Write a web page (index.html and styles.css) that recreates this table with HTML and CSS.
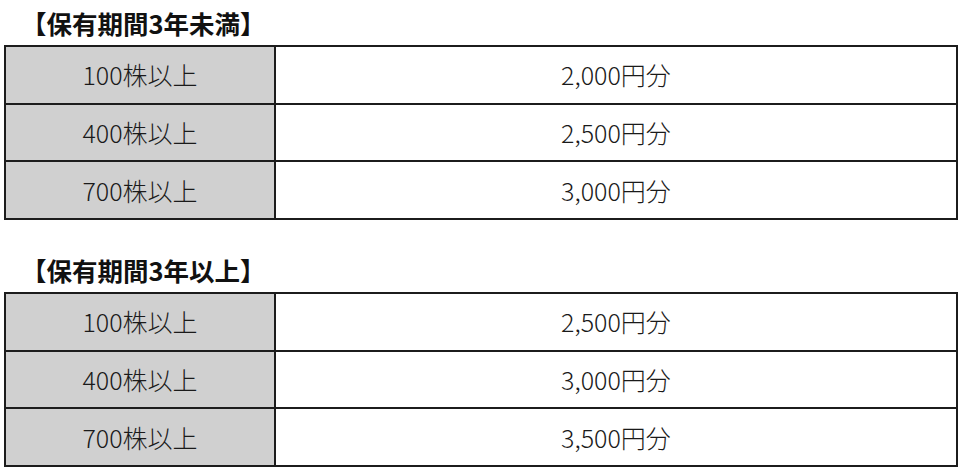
FILE: index.html
```html
<!DOCTYPE html>
<html lang="ja">
<head>
<meta charset="utf-8">
<link rel="stylesheet" href="styles.css">
</head>
<body>
<section class="block">
  <h2 class="title">【保有期間3年未満】</h2>
  <table class="tbl">
    <tr><td class="k">100株以上</td><td class="v">2,000円分</td></tr>
    <tr><td class="k">400株以上</td><td class="v">2,500円分</td></tr>
    <tr><td class="k">700株以上</td><td class="v">3,000円分</td></tr>
  </table>
</section>
<section class="block second">
  <h2 class="title">【保有期間3年以上】</h2>
  <table class="tbl">
    <tr><td class="k">100株以上</td><td class="v">2,500円分</td></tr>
    <tr><td class="k">400株以上</td><td class="v">3,000円分</td></tr>
    <tr><td class="k">700株以上</td><td class="v">3,500円分</td></tr>
  </table>
</section>
</body>
</html>
```
FILE: styles.css
```css
html, body {
  margin: 0;
  padding: 0;
  background: #ffffff;
}
body {
  padding: 0 2px 0 4px;
  font-family: "Noto Sans CJK JP", "Noto Sans", sans-serif;
  color: #1a1a1a;
}
.block {
  display: flex;
  flex-direction: column;
}
.second {
  margin-top: 27px;
}
.title {
  margin: 0;
  height: 45px;
  display: flex;
  align-items: center;
  padding-left: 17px;
  font-size: 25.5px;
  font-weight: 700;
  color: #111;
  line-height: 1;
}
.tbl {
  width: 954px;
  border-collapse: collapse;
  table-layout: fixed;
}
.tbl td {
  border: 2px solid #1c1c1c;
  height: 55.67px;
  padding: 0;
  text-align: center;
  vertical-align: middle;
  font-size: 25px;
  font-weight: 300;
  line-height: 1;
  color: #1a1a1a;
}
.tbl td.k {
  width: 268px;
  background: #d0d0d0;
}
.tbl td.v {
  background: #ffffff;
}
```
